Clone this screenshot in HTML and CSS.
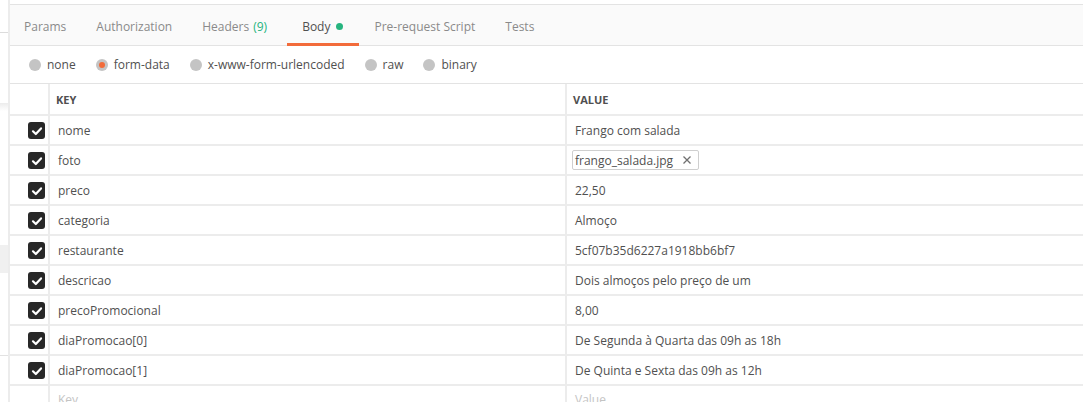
FILE: index.html
```html
<!DOCTYPE html>
<html>
<head>
<meta charset="utf-8">
<link rel="stylesheet" href="styles.css">
</head>
<body>
<div class="app">
  <div class="sidebar">
    <div class="sb-a"></div>
    <div class="sb-line"></div>
    <div class="sb-b"></div>
    <div class="sb-shadow"></div>
    <div class="sb-c"></div>
    <div class="sb-block"></div>
    <div class="sb-d"></div>
    <div class="sb-line2"></div>
  </div>
  <div class="main">
    <div class="topgap"></div>
    <div class="tabs">
      <div class="tab">Params</div>
      <div class="tab">Authorization</div>
      <div class="tab tab-headers">Headers <span class="count">(9)</span></div>
      <div class="tab active">Body <span class="dot"></span></div>
      <div class="tab">Pre-request Script</div>
      <div class="tab">Tests</div>
    </div>
    <div class="modes">
      <label class="mode"><span class="radio"></span>none</label>
      <label class="mode"><span class="radio on"></span>form-data</label>
      <label class="mode"><span class="radio"></span>x-www-form-urlencoded</label>
      <label class="mode"><span class="radio"></span>raw</label>
      <label class="mode"><span class="radio"></span>binary</label>
    </div>
    <table class="kv">
      <colgroup><col class="c-chk"><col class="c-key"><col class="c-val"></colgroup>
      <thead>
        <tr><th></th><th>KEY</th><th>VALUE</th></tr>
      </thead>
      <tbody>
        <tr><td class="chk"><span class="box"><svg viewBox="0 0 16 16" width="16" height="16"><path d="M4 8.3 L6.8 11 L12 5.4" fill="none" stroke="#fff" stroke-width="2.2" stroke-linecap="round" stroke-linejoin="round"/></svg></span></td><td>nome</td><td>Frango com salada</td></tr>
        <tr><td class="chk"><span class="box"><svg viewBox="0 0 16 16" width="16" height="16"><path d="M4 8.3 L6.8 11 L12 5.4" fill="none" stroke="#fff" stroke-width="2.2" stroke-linecap="round" stroke-linejoin="round"/></svg></span></td><td>foto</td><td class="filecell"><span class="file">frango_salada.jpg<svg class="x" viewBox="0 0 10 10" width="10" height="10"><path d="M1.5 1.5 L8.5 8.5 M8.5 1.5 L1.5 8.5" stroke="#707070" stroke-width="1.3"/></svg></span></td></tr>
        <tr><td class="chk"><span class="box"><svg viewBox="0 0 16 16" width="16" height="16"><path d="M4 8.3 L6.8 11 L12 5.4" fill="none" stroke="#fff" stroke-width="2.2" stroke-linecap="round" stroke-linejoin="round"/></svg></span></td><td>preco</td><td>22,50</td></tr>
        <tr><td class="chk"><span class="box"><svg viewBox="0 0 16 16" width="16" height="16"><path d="M4 8.3 L6.8 11 L12 5.4" fill="none" stroke="#fff" stroke-width="2.2" stroke-linecap="round" stroke-linejoin="round"/></svg></span></td><td>categoria</td><td>Almoço</td></tr>
        <tr><td class="chk"><span class="box"><svg viewBox="0 0 16 16" width="16" height="16"><path d="M4 8.3 L6.8 11 L12 5.4" fill="none" stroke="#fff" stroke-width="2.2" stroke-linecap="round" stroke-linejoin="round"/></svg></span></td><td>restaurante</td><td>5cf07b35d6227a1918bb6bf7</td></tr>
        <tr><td class="chk"><span class="box"><svg viewBox="0 0 16 16" width="16" height="16"><path d="M4 8.3 L6.8 11 L12 5.4" fill="none" stroke="#fff" stroke-width="2.2" stroke-linecap="round" stroke-linejoin="round"/></svg></span></td><td>descricao</td><td>Dois almoços pelo preço de um</td></tr>
        <tr><td class="chk"><span class="box"><svg viewBox="0 0 16 16" width="16" height="16"><path d="M4 8.3 L6.8 11 L12 5.4" fill="none" stroke="#fff" stroke-width="2.2" stroke-linecap="round" stroke-linejoin="round"/></svg></span></td><td>precoPromocional</td><td>8,00</td></tr>
        <tr><td class="chk"><span class="box"><svg viewBox="0 0 16 16" width="16" height="16"><path d="M4 8.3 L6.8 11 L12 5.4" fill="none" stroke="#fff" stroke-width="2.2" stroke-linecap="round" stroke-linejoin="round"/></svg></span></td><td>diaPromocao[0]</td><td>De Segunda à Quarta das 09h as 18h</td></tr>
        <tr><td class="chk"><span class="box"><svg viewBox="0 0 16 16" width="16" height="16"><path d="M4 8.3 L6.8 11 L12 5.4" fill="none" stroke="#fff" stroke-width="2.2" stroke-linecap="round" stroke-linejoin="round"/></svg></span></td><td>diaPromocao[1]</td><td>De Quinta e Sexta das 09h as 12h</td></tr>
        <tr class="new"><td class="chk"></td><td>Key</td><td>Value</td></tr>
      </tbody>
    </table>
  </div>
</div>
</body>
</html>
```
FILE: styles.css
```css
* { box-sizing: border-box; }
html, body { margin: 0; padding: 0; background: #fff; }
body {
  font-family: "Open Sans", "Noto Sans", sans-serif;
  font-size: 12px;
  color: #505050;
  overflow: hidden;
  height: 402px;
}
.app { display: flex; height: 402px; overflow: hidden; }

.sidebar { width: 8px; flex: none; display: flex; flex-direction: column; }
.sidebar > div { flex: none; }
.sb-a { height: 32px; }
.sb-line { height: 1px; background: #dcdcdc; }
.sb-b { height: 70px; }
.sb-shadow { height: 8px; background: linear-gradient(#ececec, #fff); }
.sb-c { height: 134px; }
.sb-block { height: 28px; background: #f0f0f0; }
.sb-d { height: 82px; }
.sb-line2 { height: 1px; background: #e2e2e2; }

.main { flex: 1; border-left: 2px solid #ececec; display: flex; flex-direction: column; min-width: 0; }
.main > * { flex: none; }
.topgap { height: 4px; }

.tabs {
  height: 42px;
  background: #fafafa;
  border-top: 1px solid #e3e3e3;
  border-bottom: 1px solid #e3e3e3;
  display: flex;
}
.tab {
  padding: 5px 15px 0;
  display: flex;
  align-items: center;
  color: #8a8a8a;
  font-size: 12px;
  border-bottom: 3px solid transparent;
  margin-bottom: -1px;
  white-space: nowrap;
}
.tab:first-child { padding-left: 14px; }
.tab-headers { padding-right: 20px; }
.tab .count { color: #26b47f; margin-left: 4px; }
.tab.active { color: #505050; border-bottom-color: #f26b3a; padding-right: 16px; }
.dot { display: inline-block; width: 7px; height: 7px; border-radius: 50%; background: #26b47f; margin-left: 6px; }

.modes {
  height: 38px;
  border-bottom: 1px solid #e3e3e3;
  display: flex;
  align-items: center;
  padding-left: 19px;
}
.mode { display: flex; align-items: center; margin-right: 20px; color: #505050; white-space: nowrap; }
.radio {
  width: 12px; height: 12px; border-radius: 50%;
  background: #c4c4c4; margin-right: 6px; position: relative;
}
.radio.on::after {
  content: ""; position: absolute; left: 3px; top: 3px;
  width: 6px; height: 6px; border-radius: 50%; background: #f26b3a;
}

.kv { border-collapse: collapse; width: 100%; table-layout: fixed; }
.c-chk { width: 39px; }
.c-key { width: 517px; }
.kv th, .kv td {
  border-bottom: 2px solid #ececec;
  border-right: 2px solid #ececec;
  text-align: left;
  padding: 0 0 0 8px;
  white-space: nowrap;
  overflow: hidden;
}
.kv th:last-child, .kv td:last-child { border-right: none; }
.kv th {
  height: 31px;
  font-size: 11px;
  font-weight: 700;
  color: #505050;
  padding-left: 6px;
  padding-top: 0;
}
.kv td { height: 30px; color: #505050; }
.kv td.chk { padding: 0 0 0 18px; }
.box {
  width: 17px; height: 17px; border-radius: 3px; background: #282828;
  display: flex; align-items: center; justify-content: center; margin-top: 1px;
}
.box svg { display: block; }
.filecell { padding-left: 5px !important; }
.file {
  display: inline-flex; align-items: center;
  border: 1px solid #cfcfcf; border-radius: 2px;
  height: 20px; padding: 0 6px 0 2px;
}
.file .x { margin-left: 9px; }
.new td { color: #c4c4c4; padding-top: 0; vertical-align: top; line-height: 28px; }
```
